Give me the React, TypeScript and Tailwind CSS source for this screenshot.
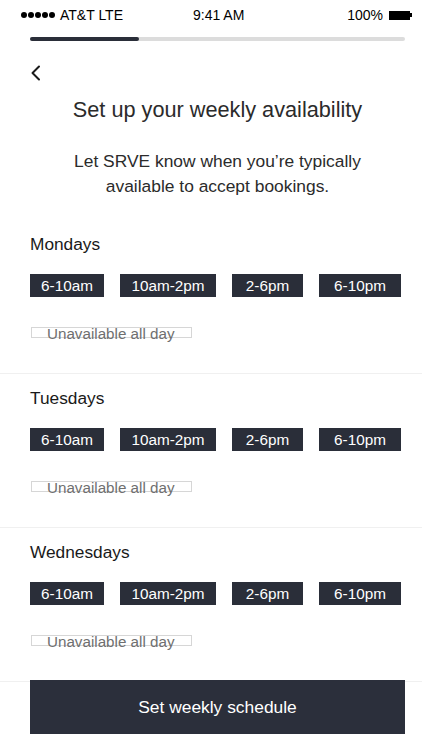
import React from "react";

const slots = [
  { label: "6-10am", w: "w-[74px]" },
  { label: "10am-2pm", w: "w-[96px]" },
  { label: "2-6pm", w: "w-[71px]" },
  { label: "6-10pm", w: "w-[82px]" },
];

function DaySection({ day }: { day: string }) {
  return (
    <div className="h-[154px] border-b border-[#f0f0f0] pl-[30px] pt-[12px]">
      <div className="text-[17.3px] leading-[24px] text-[#1a1a1a]">{day}</div>
      <div className="mt-[18px] flex gap-[16px]">
        {slots.map((s) => (
          <div
            key={s.label}
            className={`${s.w} h-[23px] bg-[#2a2e39] text-white text-[15.3px] leading-[23px] text-center`}
          >
            {s.label}
          </div>
        ))}
      </div>
      <div className="mt-[30px] ml-[1px] h-[11px] w-[161px] border border-[#d6d6d6] flex items-center pl-[15px]">
        <span className="text-[15.2px] leading-none text-[#6f6f6f] whitespace-nowrap mt-[3px]">
          Unavailable all day
        </span>
      </div>
    </div>
  );
}

export default function App() {
  return (
    <div
      className="w-[422px] h-[750px] bg-white overflow-hidden"
      style={{ fontFamily: '"Liberation Sans", Arial, sans-serif' }}
    >
      {/* status bar */}
      <div className="h-[30px] flex items-center pl-[21px] pr-[10px] text-[14px] text-black">
        <div className="w-[172px] flex items-center gap-[5px]">
          <div className="flex gap-[1px]">
            {[0, 1, 2, 3, 4].map((i) => (
              <div key={i} className="w-[6px] h-[6px] rounded-full bg-black" />
            ))}
          </div>
          <span>AT&amp;T LTE</span>
        </div>
        <span>9:41 AM</span>
        <div className="ml-auto flex items-center gap-[6px]">
          <span>100%</span>
          <div className="flex items-center">
            <div className="w-[21px] h-[9px] bg-black" />
            <div className="w-[2px] h-[4px] bg-black" />
          </div>
        </div>
      </div>
      {/* progress */}
      <div className="mt-[7px] ml-[30px] w-[375px] h-[4px] rounded-full bg-[#dcdcdc] flex">
        <div className="w-[109px] h-full rounded-full bg-[#2a2e39]" />
      </div>
      {/* back */}
      <div className="mt-[24px] ml-[29px] h-[16px]">
        <svg width="14" height="16" viewBox="0 0 14 16" fill="none">
          <path d="M10 1.5 L3.5 8 L10 14.5" stroke="#1a1a1a" strokeWidth="2" strokeLinecap="round" strokeLinejoin="round" />
        </svg>
      </div>
      <div className="ml-[30px] w-[375px]">
        <h1 className="mt-[15px] text-center text-[21.7px] leading-[28px] text-[#2b2b2b]">
          Set up your weekly availability
        </h1>
        <p className="mt-[25px] text-center text-[17.4px] leading-[25px] text-[#2b2b2b]">
          Let SRVE know when you’re typically
          <br />
          available to accept bookings.
        </p>
      </div>
      <div className="mt-[21px]">
        <DaySection day="Mondays" />
        <DaySection day="Tuesdays" />
        <DaySection day="Wednesdays" />
      </div>
      <div className="-mt-[2px] ml-[30px] w-[375px] h-[54px] bg-[#2b2f3b] flex items-center justify-center text-white text-[17.4px]">
        Set weekly schedule
      </div>
    </div>
  );
}
